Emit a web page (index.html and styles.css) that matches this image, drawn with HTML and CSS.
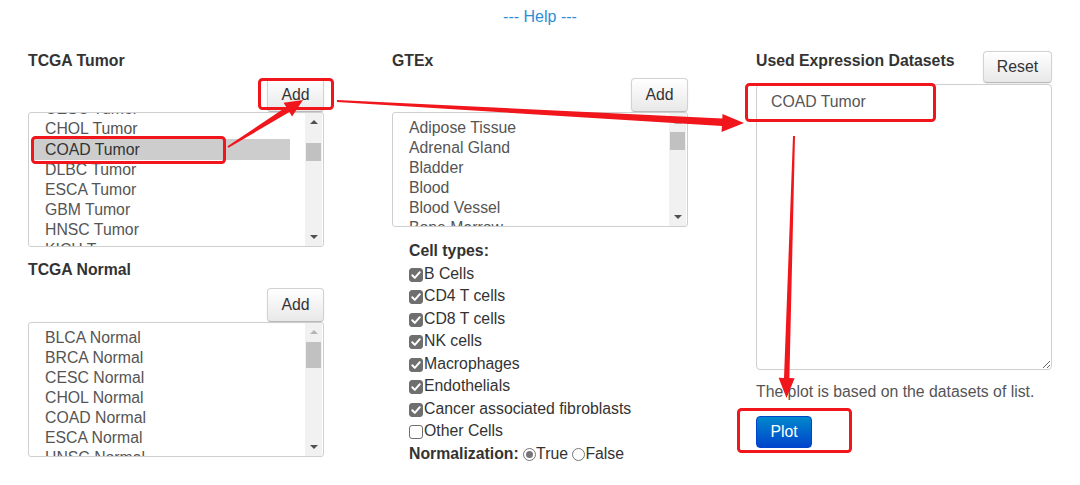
FILE: index.html
```html
<!DOCTYPE html>
<html>
<head>
<meta charset="utf-8">
<link rel="stylesheet" href="styles.css">
</head>
<body>
<div class="help"><a class="help-link">--- Help ---</a></div>
<div class="grid">
  <div class="col">
    <h4 class="title">TCGA Tumor</h4>
    <div class="btnrow"><button class="btn">Add</button></div>
    <div class="listbox lb-tall">
      <div class="opts scrolled">
        <div class="opt">CESC Tumor</div>
        <div class="opt">CHOL Tumor</div>
        <div class="opt selected">COAD Tumor</div>
        <div class="opt">DLBC Tumor</div>
        <div class="opt">ESCA Tumor</div>
        <div class="opt">GBM Tumor</div>
        <div class="opt">HNSC Tumor</div>
        <div class="opt">KICH Tumor</div>
      </div>
      <div class="sb">
        <span class="arr up"></span>
        <span class="thumb thumb-1"></span>
        <span class="arr down"></span>
      </div>
    </div>
    <h4 class="title title-2">TCGA Normal</h4>
    <div class="btnrow btnrow-2"><button class="btn">Add</button></div>
    <div class="listbox lb-tall">
      <div class="opts">
        <div class="opt">BLCA Normal</div>
        <div class="opt">BRCA Normal</div>
        <div class="opt">CESC Normal</div>
        <div class="opt">CHOL Normal</div>
        <div class="opt">COAD Normal</div>
        <div class="opt">ESCA Normal</div>
        <div class="opt">HNSC Normal</div>
      </div>
      <div class="sb">
        <span class="arr up faint"></span>
        <span class="thumb thumb-2"></span>
        <span class="arr down"></span>
      </div>
    </div>
  </div>

  <div class="col">
    <h4 class="title">GTEx</h4>
    <div class="btnrow"><button class="btn">Add</button></div>
    <div class="listbox lb-short">
      <div class="opts">
        <div class="opt">Adipose Tissue</div>
        <div class="opt">Adrenal Gland</div>
        <div class="opt">Bladder</div>
        <div class="opt">Blood</div>
        <div class="opt">Blood Vessel</div>
        <div class="opt">Bone Marrow</div>
      </div>
      <div class="sb">
        <span class="arr up faint"></span>
        <span class="thumb thumb-3"></span>
        <span class="arr down"></span>
      </div>
    </div>
    <div class="cells">
      <div class="cells-title">Cell types:</div>
      <label class="chk"><span class="cb on"><svg viewBox="0 0 14 14" width="14" height="14"><path d="M3.3 7.3 L5.8 9.9 L10.8 4.2" fill="none" stroke="#fff" stroke-width="2" stroke-linecap="round" stroke-linejoin="round"/></svg></span>B Cells</label>
      <label class="chk"><span class="cb on"><svg viewBox="0 0 14 14" width="14" height="14"><path d="M3.3 7.3 L5.8 9.9 L10.8 4.2" fill="none" stroke="#fff" stroke-width="2" stroke-linecap="round" stroke-linejoin="round"/></svg></span>CD4 T cells</label>
      <label class="chk"><span class="cb on"><svg viewBox="0 0 14 14" width="14" height="14"><path d="M3.3 7.3 L5.8 9.9 L10.8 4.2" fill="none" stroke="#fff" stroke-width="2" stroke-linecap="round" stroke-linejoin="round"/></svg></span>CD8 T cells</label>
      <label class="chk"><span class="cb on"><svg viewBox="0 0 14 14" width="14" height="14"><path d="M3.3 7.3 L5.8 9.9 L10.8 4.2" fill="none" stroke="#fff" stroke-width="2" stroke-linecap="round" stroke-linejoin="round"/></svg></span>NK cells</label>
      <label class="chk"><span class="cb on"><svg viewBox="0 0 14 14" width="14" height="14"><path d="M3.3 7.3 L5.8 9.9 L10.8 4.2" fill="none" stroke="#fff" stroke-width="2" stroke-linecap="round" stroke-linejoin="round"/></svg></span>Macrophages</label>
      <label class="chk"><span class="cb on"><svg viewBox="0 0 14 14" width="14" height="14"><path d="M3.3 7.3 L5.8 9.9 L10.8 4.2" fill="none" stroke="#fff" stroke-width="2" stroke-linecap="round" stroke-linejoin="round"/></svg></span>Endothelials</label>
      <label class="chk"><span class="cb on"><svg viewBox="0 0 14 14" width="14" height="14"><path d="M3.3 7.3 L5.8 9.9 L10.8 4.2" fill="none" stroke="#fff" stroke-width="2" stroke-linecap="round" stroke-linejoin="round"/></svg></span>Cancer associated fibroblasts</label>
      <label class="chk"><span class="cb"></span>Other Cells</label>
      <div class="norm"><span class="norm-label">Normalization:</span> <span class="radio on"></span>True <span class="radio"></span>False</div>
    </div>
  </div>

  <div class="col">
    <div class="used-head">
      <h4 class="title">Used Expression Datasets</h4>
      <button class="btn btn-reset">Reset</button>
    </div>
    <textarea class="datasets" readonly>COAD Tumor</textarea>
    <p class="note">The plot is based on the datasets of list.</p>
    <button class="btn-plot">Plot</button>
  </div>
</div>

<svg class="marks" width="1080" height="485" viewBox="0 0 1080 485">
  <g fill="none" stroke="#f0161c" stroke-width="3">
    <rect x="259.5" y="79.5" width="73" height="29" rx="3"/>
    <rect x="32.5" y="137.5" width="192" height="25" rx="3"/>
    <rect x="746.5" y="84.5" width="188" height="36" rx="3"/>
    <rect x="738.5" y="409.5" width="112" height="42" rx="3"/>
  </g>
  <g fill="#f0161c">
    <polygon points="228.5,147.8 227.5,146.2 286.2,107.1 283.6,102.8 303,100 292,116.4 289.4,112.1"/>
    <polygon points="337,100 336.9,102 722,126 721.5,132 744,123 722.5,114 722.3,118.5"/>
    <polygon points="795,136 793,136 784,377.9 778.6,377.8 786.5,398 794.6,378.2 789.4,378.1"/>
  </g>
</svg>
</body>
</html>
```

FILE: styles.css
```css
html, body {
  margin: 0;
  padding: 0;
  background: #fff;
}
body {
  font-family: "Liberation Sans", Arial, sans-serif;
  font-size: 15.8px;
  color: #555;
  position: relative;
  width: 1080px;
  height: 485px;
  overflow: hidden;
}
.help {
  padding-top: 7px;
  line-height: 20px;
  text-align: center;
  font-size: 16px;
}
.help-link {
  color: #2b8fd6;
}
.grid {
  display: grid;
  grid-template-columns: 296px 296px 296px;
  column-gap: 68px;
  margin-top: 24px;
  padding-left: 28px;
}
.col {
  display: flex;
  flex-direction: column;
}
.title {
  margin: 1px 0 0;
  font-size: 15.8px;
  line-height: 18px;
  font-weight: bold;
  color: #333;
}
.title-2 {
  margin-top: 14px;
}
.btnrow {
  display: flex;
  justify-content: flex-end;
  margin-top: 8px;
}
.btnrow-2 {
  margin-top: 9px;
}
.btn {
  font-family: "Liberation Sans", Arial, sans-serif;
  font-size: 15.8px;
  color: #333;
  height: 34px;
  width: 57px;
  padding: 0;
  border: 1px solid #d2d2d2;
  border-bottom-color: #b8b8b8;
  border-radius: 4px;
  background: linear-gradient(#ffffff, #e8e8e8);
  box-shadow: inset 0 1px 0 rgba(255,255,255,.2), 0 1px 2px rgba(0,0,0,.08);
}
.listbox {
  display: flex;
  border: 1px solid #cfcfcf;
  border-radius: 3px;
  overflow: hidden;
  box-sizing: border-box;
}
.lb-tall { height: 135px; }
.lb-short { height: 115px; }
.opts {
  flex: 1;
  padding: 5px 15px 0 3px;
  overflow: hidden;
}
.opts.scrolled {
  padding-top: 0;
}
.opts.scrolled .opt:first-child {
  margin-top: -14px;
}
.opt {
  line-height: 20px;
  height: 20px;
  padding-left: 13px;
  white-space: nowrap;
  color: #555;
}
.opt.selected {
  background: #cdcdcd;
  color: #333;
  height: 21px;
  line-height: 21px;
}
.sb {
  width: 17px;
  margin-right: 1px;
  background: #f1f1f1;
  display: flex;
  flex-direction: column;
  align-items: center;
}
.arr {
  width: 17px;
  height: 17px;
  position: relative;
  flex: none;
}
.arr::after {
  content: "";
  position: absolute;
  left: 4.5px;
  width: 0;
  height: 0;
  border-left: 4px solid transparent;
  border-right: 4px solid transparent;
}
.arr.up::after {
  top: 7px;
  border-bottom: 4px solid #505050;
}
.arr.up.faint::after {
  border-bottom-color: #b5b5b5;
}
.arr.down {
  margin-top: auto;
}
.arr.down::after {
  top: 6px;
  border-top: 4px solid #505050;
}
.thumb {
  width: 15px;
  background: #c1c1c1;
  flex: none;
}
.thumb-1 { margin-top: 13px; height: 18px; }
.thumb-2 { margin-top: 2px; height: 26px; }
.thumb-3 { margin-top: 2px; height: 18px; }

.cells {
  margin-top: 13px;
  padding-left: 17px;
  line-height: 22.5px;
  color: #333;
}
.cells-title {
  font-weight: bold;
}
.chk {
  display: block;
  white-space: nowrap;
}
.cb {
  display: inline-block;
  box-sizing: border-box;
  width: 14px;
  height: 14px;
  margin-right: 1px;
  border: 1px solid #6f6f6f;
  border-radius: 3px;
  background: #fff;
  vertical-align: -3px;
  position: relative;
}
.cb.on {
  background: #6f6f6f;
}
.cb svg {
  position: absolute;
  left: -1px;
  top: -1px;
}
.norm-label {
  font-weight: bold;
}
.radio {
  display: inline-block;
  box-sizing: border-box;
  width: 13px;
  height: 13px;
  border: 1px solid #767676;
  border-radius: 50%;
  background: #fff;
  vertical-align: -2px;
  position: relative;
}
.radio.on::after {
  content: "";
  position: absolute;
  left: 2px;
  top: 2px;
  width: 7px;
  height: 7px;
  border-radius: 50%;
  background: #767676;
}

.used-head {
  display: flex;
  justify-content: space-between;
  align-items: flex-start;
}
.btn-reset {
  width: 69px;
  height: 32px;
}
.datasets {
  display: block;
  box-sizing: border-box;
  width: 296px;
  height: 286px;
  margin: 1px 0 0;
  padding: 7px 14px;
  border: 1px solid #cfcfcf;
  border-radius: 4px;
  font-family: "Liberation Sans", Arial, sans-serif;
  font-size: 15.8px;
  line-height: 20px;
  color: #555;
  resize: vertical;
  outline: none;
}
.note {
  margin: 12px 0 0;
  line-height: 20px;
  color: #555;
}
.btn-plot {
  align-self: flex-start;
  margin-top: 14px;
  width: 56px;
  height: 32px;
  padding: 0;
  border: 1px solid #0044cc;
  border-radius: 4px;
  background: linear-gradient(#0088cc, #0044cc);
  color: #fff;
  font-family: "Liberation Sans", Arial, sans-serif;
  font-size: 15.8px;
}
.marks {
  position: absolute;
  left: 0;
  top: 0;
  pointer-events: none;
}
```
